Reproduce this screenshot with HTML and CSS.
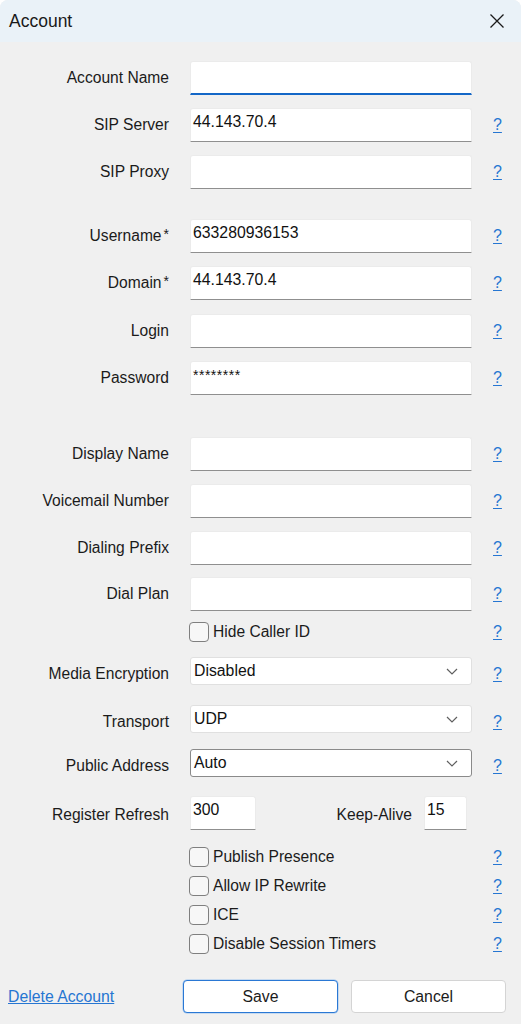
FILE: index.html
```html
<!DOCTYPE html>
<html>
<head>
<meta charset="utf-8">
<link rel="stylesheet" href="styles.css">
</head>
<body>
<div class="window">
  <div class="titlebar">
    <span class="title">Account</span>
    <svg class="close" width="16" height="16" viewBox="0 0 16 16"><path d="M1.5 1.5 L14.5 14.5 M14.5 1.5 L1.5 14.5" stroke="#1a1a1a" stroke-width="1.3" fill="none"/></svg>
  </div>
  <div class="form">
    <div class="row first">
      <label class="lbl">Account Name</label>
      <div class="input focused"></div>
      <span></span>
    </div>
    <div class="row">
      <label class="lbl">SIP Server</label>
      <div class="input">44.143.70.4</div>
      <a class="help">?</a>
    </div>
    <div class="row">
      <label class="lbl">SIP Proxy</label>
      <div class="input"></div>
      <a class="help">?</a>
    </div>
    <div class="row group">
      <label class="lbl">Username<span class="req">*</span></label>
      <div class="input">633280936153</div>
      <a class="help">?</a>
    </div>
    <div class="row">
      <label class="lbl">Domain<span class="req">*</span></label>
      <div class="input">44.143.70.4</div>
      <a class="help">?</a>
    </div>
    <div class="row wide">
      <label class="lbl">Login</label>
      <div class="input"></div>
      <a class="help">?</a>
    </div>
    <div class="row">
      <label class="lbl">Password</label>
      <div class="input pw">********</div>
      <a class="help">?</a>
    </div>
    <div class="row group2">
      <label class="lbl">Display Name</label>
      <div class="input"></div>
      <a class="help">?</a>
    </div>
    <div class="row">
      <label class="lbl">Voicemail Number</label>
      <div class="input"></div>
      <a class="help">?</a>
    </div>
    <div class="row">
      <label class="lbl">Dialing Prefix</label>
      <div class="input"></div>
      <a class="help">?</a>
    </div>
    <div class="row tight">
      <label class="lbl">Dial Plan</label>
      <div class="input"></div>
      <a class="help">?</a>
    </div>
    <div class="row cbrow first-cb">
      <span></span>
      <div class="check"><span class="box"></span>Hide Caller ID</div>
      <a class="help">?</a>
    </div>
    <div class="row selrow sel1">
      <label class="lbl">Media Encryption</label>
      <div class="select">Disabled<svg class="chev" width="12" height="7" viewBox="0 0 12 7"><path d="M1 1 L6 6 L11 1" stroke="#5f5f5f" stroke-width="1.2" fill="none"/></svg></div>
      <a class="help">?</a>
    </div>
    <div class="row selrow sel2">
      <label class="lbl">Transport</label>
      <div class="select">UDP<svg class="chev" width="12" height="7" viewBox="0 0 12 7"><path d="M1 1 L6 6 L11 1" stroke="#5f5f5f" stroke-width="1.2" fill="none"/></svg></div>
      <a class="help">?</a>
    </div>
    <div class="row selrow sel3">
      <label class="lbl">Public Address</label>
      <div class="select active">Auto<svg class="chev" width="12" height="7" viewBox="0 0 12 7"><path d="M1 1 L6 6 L11 1" stroke="#5f5f5f" stroke-width="1.2" fill="none"/></svg></div>
      <a class="help">?</a>
    </div>
    <div class="row reg">
      <label class="lbl">Register Refresh</label>
      <div class="pair">
        <div class="input small">300</div>
        <label class="lbl ka">Keep-Alive</label>
        <div class="input tiny">15</div>
      </div>
      <span></span>
    </div>
    <div class="row cbrow cb1">
      <span></span>
      <div class="check"><span class="box"></span>Publish Presence</div>
      <a class="help">?</a>
    </div>
    <div class="row cbrow cbn">
      <span></span>
      <div class="check"><span class="box"></span>Allow IP Rewrite</div>
      <a class="help">?</a>
    </div>
    <div class="row cbrow cbn">
      <span></span>
      <div class="check"><span class="box"></span>ICE</div>
      <a class="help">?</a>
    </div>
    <div class="row cbrow cbn">
      <span></span>
      <div class="check"><span class="box"></span>Disable Session Timers</div>
      <a class="help">?</a>
    </div>
    <div class="footer">
      <a class="delete">Delete Account</a>
      <button class="btn primary">Save</button>
      <button class="btn">Cancel</button>
    </div>
  </div>
</div>
</body>
</html>
```
FILE: styles.css
```css
* { box-sizing: border-box; }
html, body { margin: 0; padding: 0; background: #ffffff; }
body {
  font-family: "Liberation Sans", Arial, sans-serif;
  font-size: 15.6px;
  color: #1b1b1b;
}
.window {
  width: 521px;
  height: 1024px;
  background: #f0f0f0;
  border-radius: 8px 8px 0 0;
  overflow: hidden;
}
.titlebar {
  height: 42px;
  background: #eaf2f8;
  display: flex;
  align-items: center;
  justify-content: space-between;
  padding: 0 16px 0 9px;
}
.title { font-size: 17.5px; color: #1a1a1a; }
.close { display: block; }
.form { display: flex; flex-direction: column; }
.row {
  display: grid;
  grid-template-columns: 169px 282px auto;
  column-gap: 21px;
  align-items: center;
  margin-top: 13px;
}
.row.first { margin-top: 19px; }
.row.group { margin-top: 30px; }
.row.wide { margin-top: 14px; }
.row.group2 { margin-top: 42px; }
.row.tight { margin-top: 12px; }
.row.first-cb { margin-top: 11px; }
.row.sel1 { margin-top: 15px; }
.row.sel2 { margin-top: 20px; }
.row.sel3 { margin-top: 16px; }
.row.reg { margin-top: 19px; }
.row.cb1 { margin-top: 17px; }
.row.cbn { margin-top: 9px; }
.row.selrow .lbl, .row.selrow .help { padding-top: 5px; }
.row.reg > .lbl { padding-top: 3px; }
.lbl { text-align: right; white-space: nowrap; color: #1b1b1b; }
.req { margin-left: 2px; font-size: 14px; position: relative; top: -2px; }
.input {
  height: 34px;
  background: #ffffff;
  border: 1px solid #ebebeb;
  border-bottom: 1px solid #8f8f8f;
  border-radius: 3px 3px 0 0;
  padding: 3px 0 0 2px;
  font-size: 15.8px;
  color: #111;
  line-height: 20px;
}
.input.focused { border-bottom: 2px solid #1467c7; }
.input.pw { font-size: 14px; letter-spacing: 0.5px; }
.select {
  height: 28px;
  background: #ffffff;
  border: 1px solid #e0e0e0;
  border-radius: 3px;
  padding: 0 13px 0 3px;
  font-size: 15.8px;
  color: #111;
  display: flex;
  align-items: center;
  justify-content: space-between;
}
.select.active { border-color: #8a8a8a; }
.chev { display: block; }
.help {
  color: #2676d2;
  text-decoration: underline;
  text-underline-offset: 2px;
  font-size: 16px;
}
.check { display: flex; align-items: center; gap: 4px; margin-left: -1px; }
.box {
  width: 20px;
  height: 20px;
  border: 1px solid #7f7f7f;
  border-radius: 4px;
  background: #f7f7f7;
}
.pair { display: flex; align-items: center; padding-right: 5px; }
.input.small { width: 66px; }
.input.tiny { width: 43px; margin-left: 12px; }
.ka { margin-left: auto; padding-top: 3px; }
.footer {
  display: flex;
  align-items: center;
  margin-top: 26px;
  padding-left: 8px;
}
.delete {
  color: #2676d2;
  text-decoration: underline;
  font-size: 15.8px;
  width: 175px;
}
.btn {
  font-family: "Liberation Sans", Arial, sans-serif;
  font-size: 15.8px;
  color: #1b1b1b;
  height: 33px;
  width: 155px;
  background: #ffffff;
  border: 1px solid #d4d4d4;
  border-radius: 4px;
  margin-right: 13px;
  padding-top: 2px;
}
.btn.primary { border-color: #2a78d4; box-shadow: 0 0 0 0.5px #9cc3ef; }
```
